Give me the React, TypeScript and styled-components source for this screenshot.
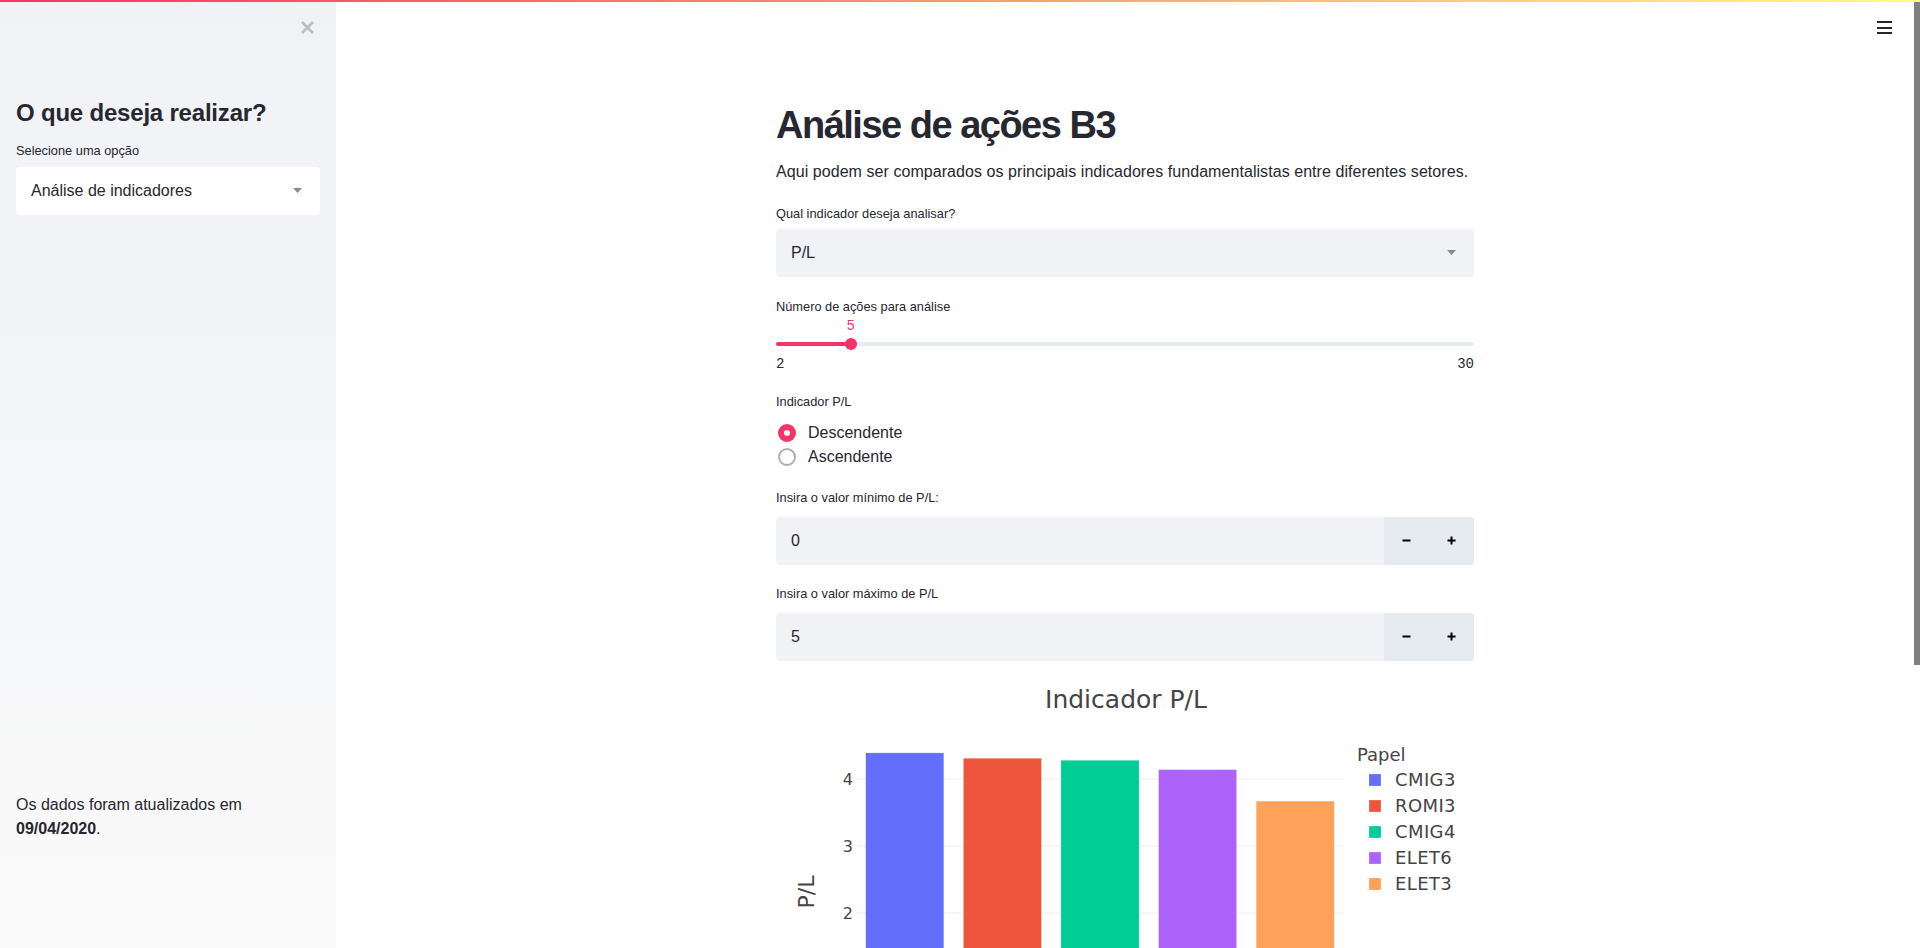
import React from "react";
import styled, { createGlobalStyle } from "styled-components";

const Global = createGlobalStyle`
  html, body { margin: 0; padding: 0; height: 100%; overflow: hidden; }
  body {
    font-family: "Liberation Sans", Arial, sans-serif;
    color: rgb(38, 39, 48);
    background: #ffffff;
  }
  #root { height: 100%; }
  * { box-sizing: border-box; }
`;

const PRIMARY = "rgb(246, 51, 102)";

const Shell = styled.div`
  position: relative;
  display: flex;
  width: 100%;
  height: 100vh;
`;

const Decoration = styled.div`
  position: absolute;
  top: 0;
  left: 0;
  right: 0;
  height: 2px;
  z-index: 10;
  background-image: linear-gradient(90deg, rgb(246, 51, 102), rgb(255, 253, 128));
`;

const Sidebar = styled.aside`
  flex: 0 0 336px;
  width: 336px;
  height: 100%;
  padding: 0 16px;
  display: flex;
  flex-direction: column;
  background-image: linear-gradient(180deg, rgb(240, 242, 246), rgb(250, 250, 250));
`;

const CloseRow = styled.div`
  display: flex;
  justify-content: flex-end;
  padding: 21px 6px 0 0;
  height: 34px;
`;

const SideHeading = styled.h2`
  margin: 62.7px 0 0;
  font-size: 24px;
  line-height: 32px;
  font-weight: 700;
  letter-spacing: -0.2px;
`;

const Label = styled.div<{ $mt: number }>`
  margin-top: ${(p) => p.$mt}px;
  font-size: 12.8px;
  line-height: 16px;
  color: rgb(38, 39, 48);
`;

const SelectBox = styled.div<{ $mt: number; $light?: boolean }>`
  margin-top: ${(p) => p.$mt}px;
  height: 48px;
  border-radius: 4px;
  background: ${(p) => (p.$light ? "#ffffff" : "rgb(240, 242, 246)")};
  display: flex;
  align-items: center;
  justify-content: space-between;
  padding: 0 18px 0 15px;
  font-size: 16px;
`;

const SideFooter = styled.p`
  margin: 578px 0 0;
  font-size: 16px;
  line-height: 24px;
  width: 260px;
`;

const Main = styled.main`
  flex: 1;
  height: 100%;
  overflow: hidden;
`;

const ScrollRail = styled.div`
  flex: 0 0 6px;
  width: 6px;
  height: 100%;
  display: flex;
  flex-direction: column;
  background: #ffffff;
`;

const ScrollThumb = styled.div`
  height: 665px;
  background: rgb(128, 128, 128);
`;

const Toolbar = styled.div`
  position: absolute;
  top: 21px;
  right: 28px;
  display: flex;
  flex-direction: column;
  gap: 3.5px;
  z-index: 5;
`;

const Bar = styled.span`
  display: block;
  width: 15px;
  height: 2px;
  background: rgb(38, 39, 48);
`;

const Block = styled.div`
  max-width: 730px;
  margin: 0 auto;
  padding: 101px 16px 223px;
  display: flex;
  flex-direction: column;
`;

const Title = styled.h1`
  margin: 0;
  font-size: 38px;
  line-height: 48px;
  font-weight: 700;
  letter-spacing: -1.5px;
`;

const Paragraph = styled.p`
  margin: 10.5px 0 0;
  font-size: 16px;
  line-height: 24px;
  letter-spacing: 0.06px;
`;

const SliderValue = styled.div<{ $pct: number }>`
  margin-top: 2.4px;
  height: 16px;
  position: relative;
  font-family: "Liberation Mono", "DejaVu Sans Mono", monospace;
  font-size: 14px;
  line-height: 16px;
  color: ${PRIMARY};
  & > span {
    position: absolute;
    left: ${(p) => p.$pct}%;
    transform: translateX(-50%);
  }
`;

const TrackRow = styled.div`
  margin-top: 2px;
  height: 16px;
  display: flex;
  align-items: center;
`;

const Track = styled.div`
  position: relative;
  width: 100%;
  height: 4px;
  border-radius: 2px;
  background: rgb(230, 234, 241);
`;

const TrackFill = styled.div`
  height: 100%;
  border-radius: 2px;
  background: ${PRIMARY};
`;

const Thumb = styled.div`
  position: absolute;
  top: 50%;
  width: 12px;
  height: 12px;
  border-radius: 50%;
  background: ${PRIMARY};
  transform: translate(-50%, -50%);
`;

const MinMax = styled.div`
  margin-top: 4px;
  display: flex;
  justify-content: space-between;
  font-family: "Liberation Mono", "DejaVu Sans Mono", monospace;
  font-size: 14px;
  line-height: 16px;
`;

const RadioGroup = styled.div`
  margin-top: 10.4px;
  display: flex;
  flex-direction: column;
`;

const RadioRow = styled.label`
  display: flex;
  align-items: center;
  gap: 12px;
  height: 24px;
  padding-left: 2px;
  font-size: 16px;
`;

const RadioCircle = styled.span<{ $checked?: boolean }>`
  width: 18px;
  height: 18px;
  border-radius: 50%;
  display: flex;
  align-items: center;
  justify-content: center;
  background: ${(p) => (p.$checked ? PRIMARY : "#ffffff")};
  border: 2px solid ${(p) => (p.$checked ? PRIMARY : "rgb(172, 174, 184)")};
  &::after {
    content: "";
    display: ${(p) => (p.$checked ? "block" : "none")};
    width: 6px;
    height: 6px;
    border-radius: 50%;
    background: #ffffff;
  }
`;

const NumberBox = styled.div<{ $mt: number }>`
  margin-top: ${(p) => p.$mt}px;
  height: 48px;
  display: flex;
  border-radius: 4px;
  overflow: hidden;
  background: rgb(240, 242, 246);
`;

const NumberValue = styled.div`
  flex: 1;
  display: flex;
  align-items: center;
  padding-left: 15px;
  font-size: 16px;
`;

const StepButton = styled.button`
  width: 45px;
  border: none;
  padding: 0;
  display: flex;
  align-items: center;
  justify-content: center;
  background: rgb(230, 234, 241);
  color: #000;
`;

const ChartWrap = styled.div`
  margin-top: 17px;
  height: 450px;
`;

const ChartSvg = styled.svg`
  display: block;
  font-family: "DejaVu Sans", Verdana, sans-serif;
`;

const Caret = () => (
  <svg width="9" height="5" viewBox="0 0 9 5">
    <path d="M0 0 L9 0 L4.5 5 Z" fill="rgb(135, 138, 148)" />
  </svg>
);

const CloseIcon = () => (
  <svg width="13" height="13" viewBox="0 0 13 13">
    <path d="M1 1 L12 12 M12 1 L1 12" stroke="rgb(189, 190, 197)" strokeWidth="2.8" />
  </svg>
);

const Minus = () => (
  <svg width="9" height="9" viewBox="0 0 9 9">
    <rect x="0.5" y="3.5" width="8" height="2" fill="#000" />
  </svg>
);

const Plus = () => (
  <svg width="9" height="9" viewBox="0 0 9 9">
    <rect x="0.5" y="3.5" width="8" height="2" fill="#000" />
    <rect x="3.5" y="0.5" width="2" height="8" fill="#000" />
  </svg>
);

type Series = { name: string; value: number; color: string };

const data: Series[] = [
  { name: "CMIG3", value: 4.39, color: "#636efa" },
  { name: "ROMI3", value: 4.31, color: "#EF553B" },
  { name: "CMIG4", value: 4.28, color: "#00cc96" },
  { name: "ELET6", value: 4.14, color: "#ab63fa" },
  { name: "ELET3", value: 3.67, color: "#FFA15A" },
];

const Chart = ({ series }: { series: Series[] }) => {
  const x0 = 80;
  const plotW = 488;
  const zeroY = 369;
  const unit = 67;
  const band = plotW / series.length;
  const barW = band * 0.8;
  return (
    <ChartSvg width="698" height="450" viewBox="0 0 698 450">
      <text x="350" y="30" textAnchor="middle" fontSize="25" fill="#444">
        Indicador P/L
      </text>
      {[1, 2, 3, 4].map((v) => (
        <line key={v} x1={x0} x2={x0 + plotW} y1={zeroY - v * unit} y2={zeroY - v * unit} stroke="#eee" strokeWidth="1" />
      ))}
      {series.map((s, i) => (
        <rect
          key={s.name}
          x={x0 + i * band + (band - barW) / 2}
          y={zeroY - s.value * unit}
          width={barW}
          height={s.value * unit}
          fill={s.color}
          stroke="rgba(255,255,255,0.5)"
          strokeWidth="0.5"
        />
      ))}
      <line x1={x0} x2={x0 + plotW} y1={zeroY} y2={zeroY} stroke="#444" strokeWidth="1" />
      {[0, 1, 2, 3, 4].map((v) => (
        <text key={v} x="77" y={zeroY - v * unit + 6} textAnchor="end" fontSize="16" fill="#444">
          {v}
        </text>
      ))}
      <text x="38" y="214" textAnchor="middle" fontSize="22" fill="#444" transform="rotate(-90 38 214)">
        P/L
      </text>
      {series.map((s, i) => (
        <text key={s.name} x={x0 + i * band + band / 2} y={zeroY + 24} textAnchor="middle" fontSize="16" fill="#444">
          {s.name}
        </text>
      ))}
      <text x={x0 + plotW / 2} y={zeroY + 62} textAnchor="middle" fontSize="22" fill="#444">
        Papel
      </text>
      <text x="581" y="83" fontSize="18" fill="#444">
        Papel
      </text>
      {series.map((s, i) => (
        <g key={s.name}>
          <rect x="593" y={96 + i * 26} width="12" height="12" fill={s.color} stroke="rgba(255,255,255,0.5)" strokeWidth="0.5" />
          <text x="619" y={108 + i * 26} fontSize="18" letterSpacing="0.4" fill="#444">
            {s.name}
          </text>
        </g>
      ))}
    </ChartSvg>
  );
};

const NumberInput = ({ value, mt }: { value: string; mt: number }) => (
  <NumberBox $mt={mt}>
    <NumberValue>{value}</NumberValue>
    <StepButton aria-label="diminuir">
      <Minus />
    </StepButton>
    <StepButton aria-label="aumentar">
      <Plus />
    </StepButton>
  </NumberBox>
);

export default function App() {
  const min = 2;
  const max = 30;
  const val = 5;
  const pct = ((val - min) / (max - min)) * 100;
  return (
    <>
      <Global />
      <Shell>
        <Decoration />
        <Sidebar>
          <CloseRow>
            <CloseIcon />
          </CloseRow>
          <SideHeading>O que deseja realizar?</SideHeading>
          <Label $mt={13.9}>Selecione uma opção</Label>
          <SelectBox $mt={8.4} $light>
            <span>Análise de indicadores</span>
            <Caret />
          </SelectBox>
          <SideFooter>
            Os dados foram atualizados em <strong>09/04/2020</strong>.
          </SideFooter>
        </Sidebar>
        <Main>
          <Block>
            <Title>Análise de ações B3</Title>
            <Paragraph>
              Aqui podem ser comparados os principais indicadores fundamentalistas entre diferentes setores.
            </Paragraph>
            <Label $mt={22}>Qual indicador deseja analisar?</Label>
            <SelectBox $mt={7.4}>
              <span>P/L</span>
              <Caret />
            </SelectBox>
            <Label $mt={22.6}>Número de ações para análise</Label>
            <SliderValue $pct={pct}>
              <span>{val}</span>
            </SliderValue>
            <TrackRow>
              <Track>
                <TrackFill style={{ width: `${pct}%` }} />
                <Thumb style={{ left: `${pct}%` }} />
              </Track>
            </TrackRow>
            <MinMax>
              <span>{min}</span>
              <span>{max}</span>
            </MinMax>
            <Label $mt={22.6}>Indicador P/L</Label>
            <RadioGroup>
              <RadioRow>
                <RadioCircle $checked />
                Descendente
              </RadioRow>
              <RadioRow>
                <RadioCircle />
                Ascendente
              </RadioRow>
            </RadioGroup>
            <Label $mt={21.6}>Insira o valor mínimo de P/L:</Label>
            <NumberInput value="0" mt={10.4} />
            <Label $mt={21.6}>Insira o valor máximo de P/L</Label>
            <NumberInput value="5" mt={10.4} />
            <ChartWrap>
              <Chart series={data} />
            </ChartWrap>
          </Block>
        </Main>
        <ScrollRail>
          <ScrollThumb />
        </ScrollRail>
        <Toolbar>
          <Bar />
          <Bar />
          <Bar />
        </Toolbar>
      </Shell>
    </>
  );
}
